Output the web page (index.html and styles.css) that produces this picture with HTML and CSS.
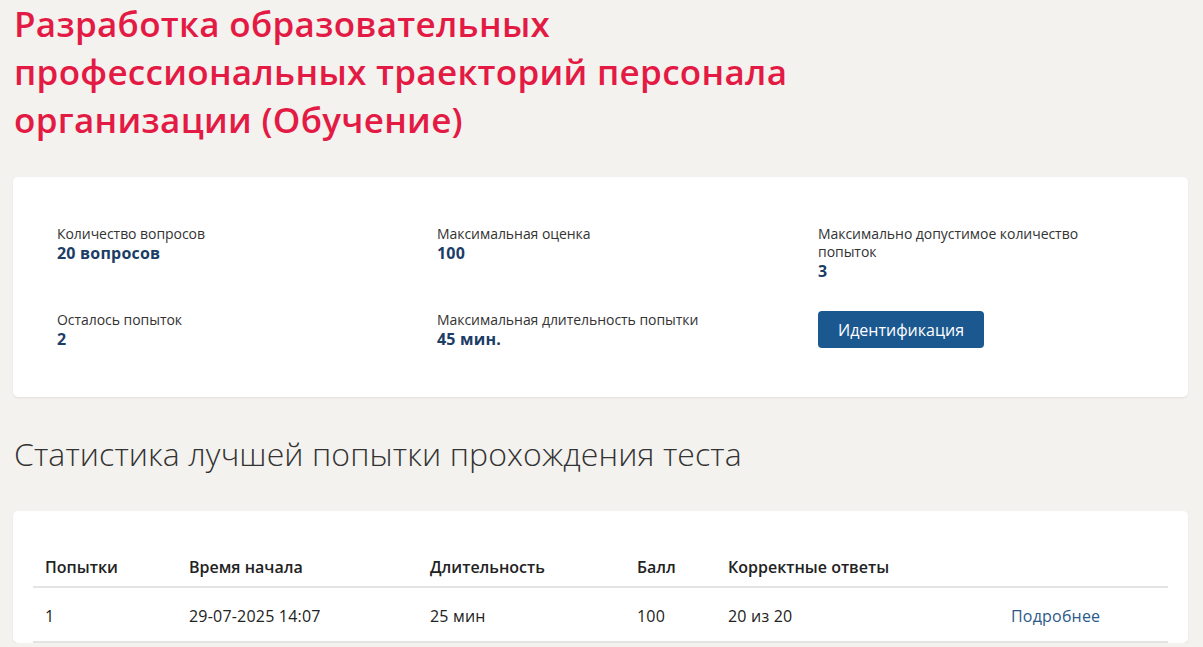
FILE: index.html
```html
<!DOCTYPE html>
<html lang="ru">
<head>
<meta charset="utf-8">
<link rel="stylesheet" href="styles.css">
</head>
<body>
<main class="page">
  <h1 class="title">Разработка образовательных профессиональных траекторий персонала организации (Обучение)</h1>

  <section class="card info">
    <div class="info-grid">
      <div class="item">
        <div class="label">Количество вопросов</div>
        <div class="value">20 вопросов</div>
      </div>
      <div class="item">
        <div class="label">Максимальная оценка</div>
        <div class="value">100</div>
      </div>
      <div class="item">
        <div class="label">Максимально допустимое количество попыток</div>
        <div class="value">3</div>
      </div>
      <div class="item">
        <div class="label">Осталось попыток</div>
        <div class="value">2</div>
      </div>
      <div class="item">
        <div class="label">Максимальная длительность попытки</div>
        <div class="value">45 мин.</div>
      </div>
      <div class="item">
        <button class="btn">Идентификация</button>
      </div>
    </div>
  </section>

  <h2 class="subtitle">Статистика лучшей попытки прохождения теста</h2>

  <section class="card stats">
    <table class="table">
      <thead>
        <tr>
          <th class="c1">Попытки</th>
          <th class="c2">Время начала</th>
          <th class="c3">Длительность</th>
          <th class="c4">Балл</th>
          <th class="c5">Корректные ответы</th>
          <th class="c6"></th>
        </tr>
      </thead>
      <tbody>
        <tr>
          <td>1</td>
          <td>29-07-2025 14:07</td>
          <td>25 мин</td>
          <td>100</td>
          <td>20 из 20</td>
          <td><a class="link" href="#">Подробнее</a></td>
        </tr>
      </tbody>
    </table>
  </section>
</main>
</body>
</html>
```

FILE: styles.css
```css
* { box-sizing: border-box; }
html, body { margin: 0; padding: 0; }
body {
  background: #f3f2ef;
  font-family: "Open Sans", "Noto Sans", sans-serif;
  color: #222;
}
.page {
  padding: 0 15px 0 13px;
}
.title {
  margin: 0;
  padding: 0 0 0 1px;
  font-family: "Open Sans", sans-serif;
  font-weight: 600;
  font-size: 35px;
  line-height: 48px;
  letter-spacing: 0.3px;
  color: #e31b44;
  width: 820px;
}
.card {
  background: #fff;
  border-radius: 5px;
  box-shadow: 0 1px 2px rgba(0,0,0,0.08);
}
.info {
  margin-top: 33px;
  padding: 48px 44px 48px 44px;
}
.info-grid {
  display: grid;
  grid-template-columns: 380px 381px 1fr;
  row-gap: 30px;
}
.label {
  font-size: 14px;
  line-height: 18px;
  color: #333;
  letter-spacing: -0.05px;
  width: 300px;
}
.value {
  font-size: 16px;
  line-height: 20px;
  font-weight: 700;
  color: #1b3d66;
  letter-spacing: 0.2px;
}
.btn {
  font-family: "Open Sans", sans-serif;
  font-size: 16px;
  color: #fff;
  background: #1c5890;
  border: 0;
  border-radius: 4px;
  height: 37px;
  padding: 0 20px;
  letter-spacing: 0;
}
.subtitle {
  margin: 0;
  padding: 37px 0 0 1px;
  font-weight: 300;
  font-size: 32px;
  line-height: 40px;
  color: #333;
  letter-spacing: 0.1px;
}
.stats {
  margin-top: 37px;
  padding: 37px 20px 0 20px;
}
.table {
  width: 100%;
  border-collapse: collapse;
  font-size: 16px;
  letter-spacing: 0;
}
.table th {
  text-align: left;
  font-weight: 600;
  color: #222;
  padding: 8px 12px 8px 12px;
  border-bottom: 2px solid #e4e4e4;
  line-height: 22px;
}
.table td {
  padding: 17px 12px 14px 12px;
  border-bottom: 2px solid #e4e4e4;
  color: #222;
  line-height: 22px;
  letter-spacing: 0.2px;
}
.c1 { width: 144px; }
.c2 { width: 241px; }
.c3 { width: 207px; }
.c4 { width: 91px; }
.c5 { width: 283px; }
.link {
  color: #2c5a88;
  text-decoration: none;
}
```
